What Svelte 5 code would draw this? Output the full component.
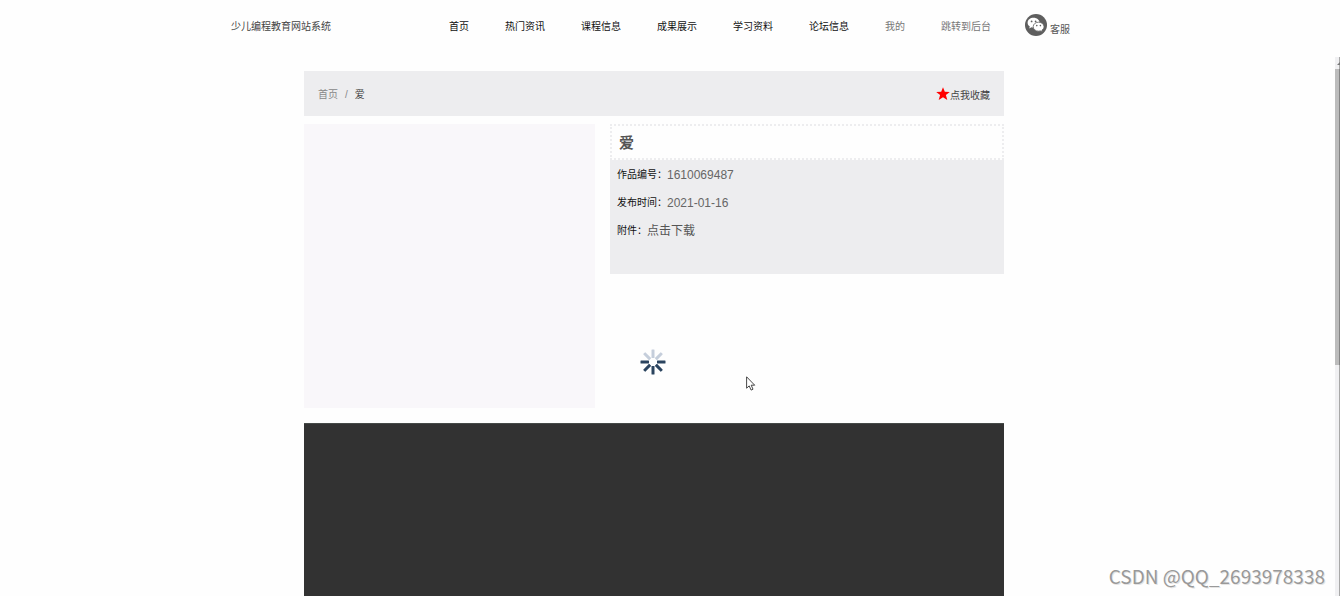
<script lang="ts">
  interface NavItem {
    label: string;
    muted?: boolean;
  }

  const navItems: NavItem[] = [
    { label: '首页' },
    { label: '热门资讯' },
    { label: '课程信息' },
    { label: '成果展示' },
    { label: '学习资料' },
    { label: '论坛信息' },
    { label: '我的', muted: true },
    { label: '跳转到后台', muted: true }
  ];

  const work = {
    title: '爱',
    code: '1610069487',
    date: '2021-01-16'
  };

  const spokes = [0, 45, 90, 135, 180, 225, 270, 315];

  let favorite = $state(false);

  // upper spokes are the faded ones
  function spokeColor(angle: number) {
    return angle < 90 || angle > 270 ? '#c5cedb' : '#2b445f';
  }
</script>

<div class="page">
  <header class="header">
    <a class="brand" href="#home">少儿编程教育网站系统</a>
    <nav class="nav">
      {#each navItems as item}
        <a href="#nav" class:muted={item.muted}>{item.label}</a>
      {/each}
    </nav>
    <a class="service" href="#service">
      <svg width="22" height="22" viewBox="0 0 22 22" aria-hidden="true">
        <circle cx="11" cy="11" r="11" fill="#5e5e5e" />
        <path
          d="M8.600 3.800c-3.400 0-6 2.100-6 4.900 0 1.600.9 2.900 2.200 3.700l-.6 2 2.300-1.200c.7.200 1.400.3 2.100.3 3.400 0 6-2.100 6-4.800s-2.600-4.900-6-4.900z"
          fill="#fff"
        />
        <path
          d="M13.600 8.200c-3.100 0-5.400 2-5.400 4.500s2.300 4.500 5.400 4.500c.6 0 1.200-.1 1.800-.3l2.100 1.100-.6-1.900c1.300-.8 2.100-2 2.100-3.400 0-2.500-2.400-4.500-5.400-4.500z"
          fill="#fff"
          stroke="#5e5e5e"
          stroke-width=".8"
        />
        <circle cx="6.600" cy="7.400" r=".9" fill="#5e5e5e" />
        <circle cx="10.600" cy="7.400" r=".9" fill="#5e5e5e" />
        <circle cx="11.800" cy="11.600" r=".8" fill="#5e5e5e" />
        <circle cx="15.400" cy="11.600" r=".8" fill="#5e5e5e" />
      </svg>
      <span>客服</span>
    </a>
  </header>

  <main class="content">
    <div class="toolbar">
      <nav class="crumbs" aria-label="breadcrumb">
        <a href="#home">首页</a>
        <span>/</span>
        <strong>{work.title}</strong>
      </nav>
      <button class="favorite" aria-pressed={favorite} onclick={() => (favorite = !favorite)}>
        <svg width="14" height="14" viewBox="0 0 14 14" aria-hidden="true">
          <path d="M7 .2l1.800 4.600 5 .2-3.900 3.100 1.400 4.900L7 10.300l-4.300 2.700 1.400-4.900L.2 5l5-.2z" fill="#f00" />
        </svg>
        <span>点我收藏</span>
      </button>
    </div>

    <section class="detail">
      <div class="cover"></div>
      <div class="info">
        <h1>{work.title}</h1>
        <dl>
          <div class="row">
            <dt>作品编号：</dt>
            <dd>{work.code}</dd>
          </div>
          <div class="row">
            <dt>发布时间：</dt>
            <dd>{work.date}</dd>
          </div>
          <div class="row">
            <dt>附件：</dt>
            <dd><a href="#download">点击下载</a></dd>
          </div>
        </dl>
      </div>
    </section>

    <div class="player"></div>
  </main>

  <svg class="spinner" width="26" height="26" viewBox="-13 -13 26 26" aria-hidden="true">
    {#each spokes as angle}
      <rect
        x="-1.500"
        y="-12.500"
        width="3"
        height="8.500"
        rx=".5"
        fill={spokeColor(angle)}
        transform="rotate({angle})"
      />
    {/each}
  </svg>

  <svg class="cursor" width="10" height="15" viewBox="0 0 10 15" aria-hidden="true">
    <path d="M.6.800v11.400l2.600-2.300 1.900 4.200 1.900-.9-1.800-4h3.500z" fill="#fff" stroke="#333" stroke-width=".9" />
  </svg>

  <div class="scrollbar">
    <svg width="5" height="12" viewBox="0 0 5 12" aria-hidden="true">
      <path d="M2 8l3-3v3z" fill="#777" />
    </svg>
    <div class="thumb"></div>
  </div>

  <div class="watermark">CSDN @QQ_2693978338</div>
</div>

<style>
  :global(body) {
    background: #fefefe;
    overflow: hidden;
  }

  .page {
    position: relative;
    display: flex;
    flex-direction: column;
    box-sizing: border-box;
    min-height: 100vh;
    padding-right: 32px;
    font-family: "Liberation Sans", "Noto Sans CJK SC", sans-serif;
    font-size: 10px;
    line-height: 16px;
    color: #444;
  }

  a {
    color: inherit;
    text-decoration: none;
  }

  .header {
    display: flex;
    align-items: center;
    box-sizing: border-box;
    width: 100%;
    max-width: 846px;
    height: 50px;
    margin: 0 auto;
    white-space: nowrap;
  }

  .brand,
  .nav {
    padding-top: 3px;
  }

  .nav {
    display: flex;
    gap: 36px;
    margin-left: 118px;
    color: #111;
  }

  .nav .muted {
    color: #777;
  }

  .service {
    display: flex;
    align-items: center;
    gap: 3px;
    margin-left: 34px;
    color: #555;
  }

  .service span {
    padding-top: 9px;
  }

  .content {
    display: flex;
    flex-direction: column;
    flex: 1;
    width: 100%;
    max-width: 700px;
    margin: 21px auto 0;
  }

  .toolbar {
    display: flex;
    align-items: center;
    justify-content: space-between;
    height: 45px;
    padding: 0 14px;
    background: #ededef;
  }

  .crumbs {
    display: flex;
    gap: 7px;
    padding-top: 2px;
    color: #888;
  }

  .crumbs strong {
    font-weight: 400;
    color: #444;
  }

  .favorite {
    display: flex;
    align-items: center;
    padding: 0;
    border: 0;
    background: none;
    font: inherit;
    color: #444;
    cursor: pointer;
  }

  .favorite span {
    padding-top: 4px;
  }

  .detail {
    display: grid;
    grid-template-columns: 291fr 394fr;
    gap: 15px;
    align-items: start;
    margin: 8px 0 15px;
  }

  .cover {
    height: 284px;
    background: #f9f7fa;
  }

  h1 {
    box-sizing: border-box;
    height: 36px;
    margin: 0;
    padding: 0 7px;
    border: 2px dotted #ededef;
    font-size: 15px;
    line-height: 33px;
    color: #555;
  }

  dl {
    box-sizing: border-box;
    height: 114px;
    margin: 0;
    padding: 1px 7px 0;
    background: #ededef;
  }

  .row {
    display: flex;
    align-items: center;
    height: 28px;
  }

  dt {
    color: #111;
  }

  dd {
    margin: 0;
    font-size: 12px;
    color: #666;
  }

  dd a {
    color: #555;
  }

  .player {
    flex: 1;
    background: #323232;
    border-top: 1px solid #464a48;
  }

  .spinner {
    position: absolute;
    top: 349px;
    left: calc(50% - 30px);
  }

  .cursor {
    position: absolute;
    top: 376px;
    left: calc(50% + 76px);
  }

  .scrollbar {
    position: absolute;
    top: 57px;
    right: 0;
    bottom: 0;
    width: 5px;
    background: linear-gradient(90deg, #f0f0f2 4px, #a8a8a8 4px);
  }

  .scrollbar svg {
    display: block;
  }

  .thumb {
    height: 296px;
    background: linear-gradient(90deg, #bcbcbc 4px, #858585 4px);
  }

  .watermark {
    position: absolute;
    right: 15px;
    bottom: 8px;
    font-family: "Noto Sans CJK SC", sans-serif;
    font-size: 19px;
    line-height: 24px;
    color: #999;
    text-shadow: 1px 1px 0 #e4e4e4;
  }
</style>
